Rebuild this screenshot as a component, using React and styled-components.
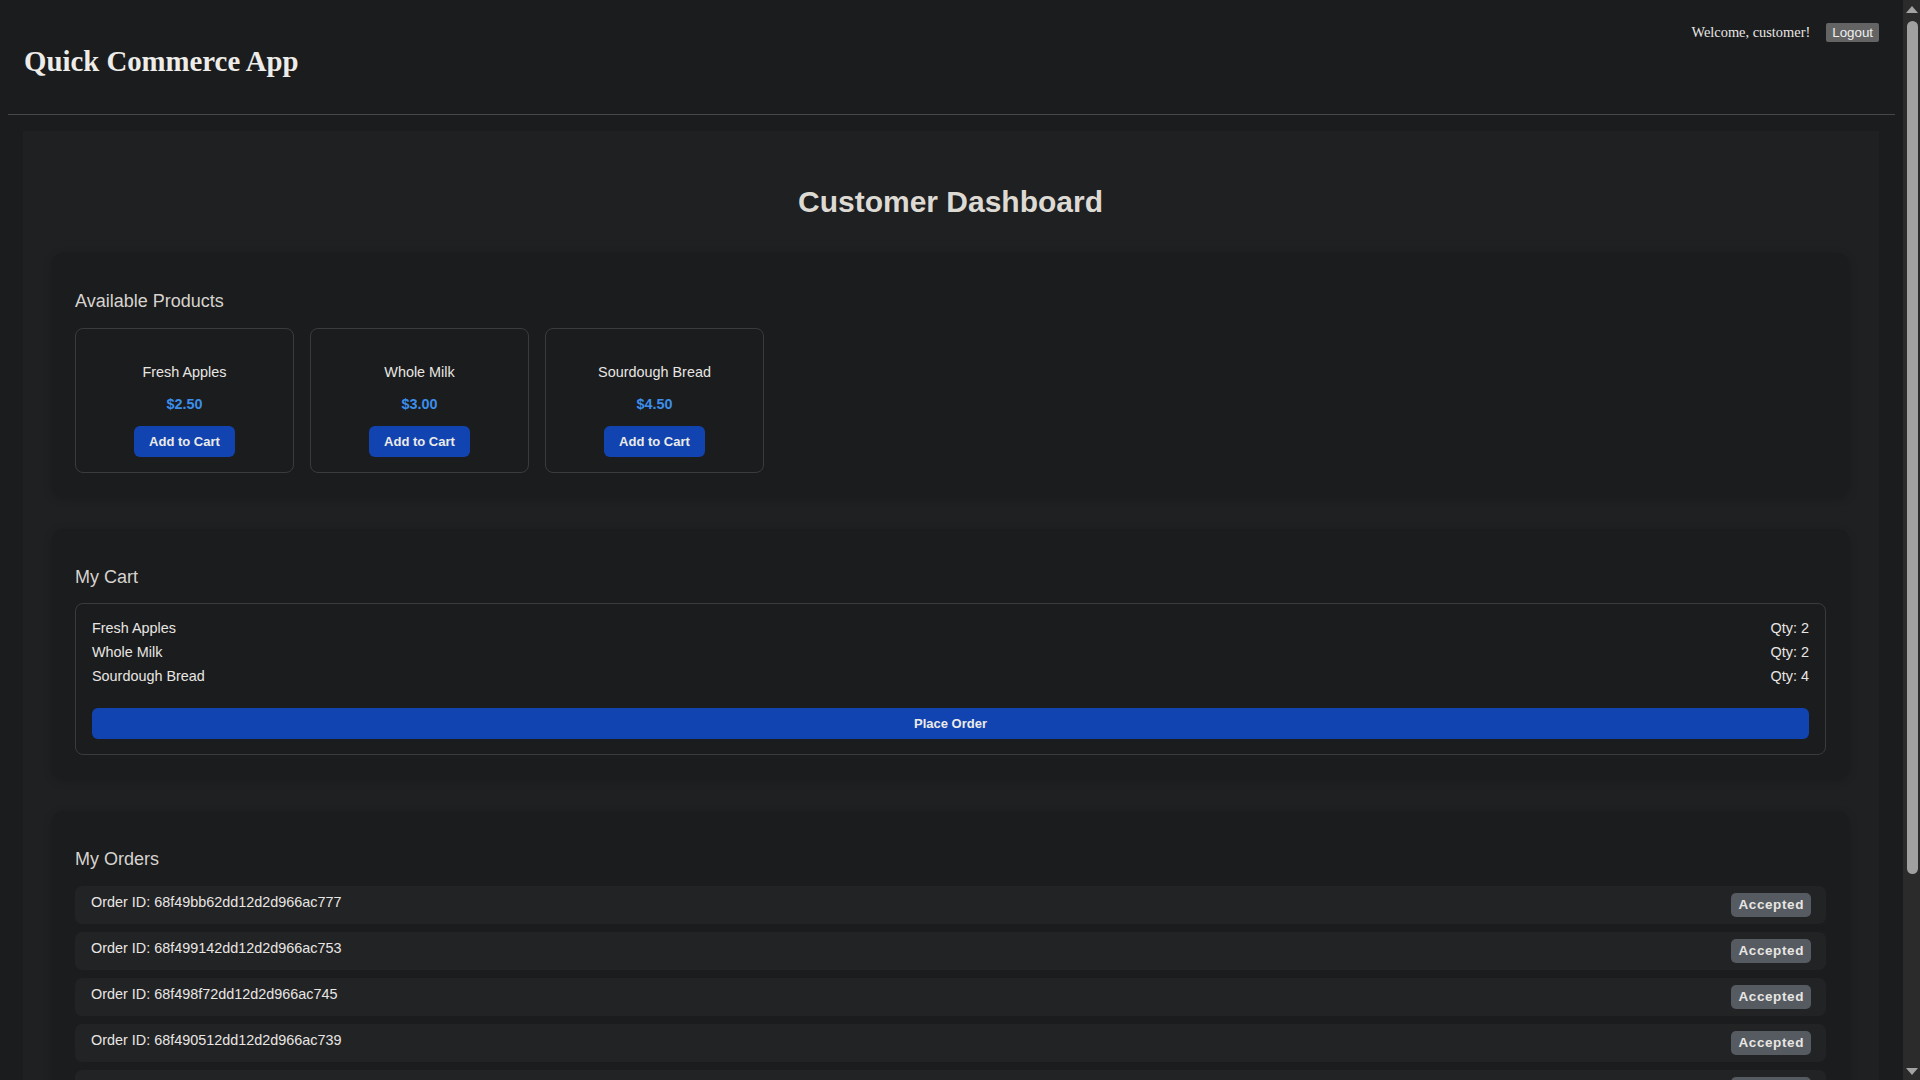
import React from "react";
import styled, { createGlobalStyle } from "styled-components";

const GlobalStyle = createGlobalStyle`
    html {
        color-scheme: dark;
        background: #1b1c1e;
    }
    body {
        margin: 8px 25px 8px 8px;
        background: #1b1c1e;
        color: #e8e6e3;
        font-family: "Liberation Sans", Arial, sans-serif;
    }
`;

const products = [
    { name: "Fresh Apples", price: "$2.50" },
    { name: "Whole Milk", price: "$3.00" },
    { name: "Sourdough Bread", price: "$4.50" },
];

const cart = [
    { name: "Fresh Apples", qty: 2 },
    { name: "Whole Milk", qty: 2 },
    { name: "Sourdough Bread", qty: 4 },
];

const orders = [
    "68f49bb62dd12d2d966ac777",
    "68f499142dd12d2d966ac753",
    "68f498f72dd12d2d966ac745",
    "68f490512dd12d2d966ac739",
    "68f48f3a2dd12d2d966ac72b",
    "68f48e1c2dd12d2d966ac71d",
    "68f48c052dd12d2d966ac70f",
    "68f48a9e2dd12d2d966ac701",
];

export default function App() {
    return (
        <>
            <GlobalStyle />
            <Header>
                <AppTitle>Quick Commerce App</AppTitle>
                <UserBox>
                    <Welcome>Welcome, customer!</Welcome>
                    <LogoutButton>Logout</LogoutButton>
                </UserBox>
            </Header>
            <Dashboard>
                <PageTitle>Customer Dashboard</PageTitle>

                <Section>
                    <SectionTitle>Available Products</SectionTitle>
                    <ProductList>
                        {products.map((p) => (
                            <ProductCard key={p.name}>
                                <ProductName>{p.name}</ProductName>
                                <Price>{p.price}</Price>
                                <BlueButton>Add to Cart</BlueButton>
                            </ProductCard>
                        ))}
                    </ProductList>
                </Section>

                <Section>
                    <SectionTitle>My Cart</SectionTitle>
                    <CartBox>
                        {cart.map((c) => (
                            <CartRow key={c.name}>
                                <span>{c.name}</span>
                                <span>Qty: {c.qty}</span>
                            </CartRow>
                        ))}
                        <BlueButton $wide>Place Order</BlueButton>
                    </CartBox>
                </Section>

                <Section>
                    <SectionTitle>My Orders</SectionTitle>
                    <OrderList>
                        {orders.map((id) => (
                            <OrderRow key={id}>
                                <OrderId>Order ID: {id}</OrderId>
                                <Badge>Accepted</Badge>
                            </OrderRow>
                        ))}
                    </OrderList>
                </Section>
            </Dashboard>
            <ScrollTrack>
                <Arrow />
                <Thumb />
                <Arrow $down />
            </ScrollTrack>
        </>
    );
}

const Header = styled.header`
    display: flex;
    justify-content: space-between;
    align-items: flex-start;
    padding: 0 16px;
    border-bottom: 1px solid #46474a;
`;

const AppTitle = styled.h1`
    font-family: "Liberation Serif", "Times New Roman", serif;
    font-weight: bold;
    font-size: 28.8px;
    line-height: 33px;
    color: #eeece8;
    margin: 37px 0 36px;
`;

const UserBox = styled.div`
    display: flex;
    align-items: center;
    margin-top: 15px;
`;

const Welcome = styled.span`
    font-family: "Liberation Serif", "Times New Roman", serif;
    font-size: 14.4px;
    color: #e8e6e3;
    margin-right: 16px;
`;

const LogoutButton = styled.button`
    font-family: "Liberation Sans", Arial, sans-serif;
    font-size: 13.33px;
    color: #f0f0f0;
    background: #646464;
    border: none;
    border-radius: 2px;
    padding: 2px 6px;
    line-height: 15px;
`;

const Dashboard = styled.main`
    margin: 16px 16px 16px 15px;
    padding: 30px 30px 30px 29px;
    background: #1f2022;
`;

const PageTitle = styled.h2`
    text-align: center;
    font-size: 30px;
    font-weight: bold;
    color: #dddad4;
    margin: 24px 0 34px;
`;

const Section = styled.section`
    background: #1b1c1e;
    border-radius: 12px;
    padding: 20px 23px 24px;
    margin-bottom: 32px;
    box-shadow: 0 2px 10px rgba(0, 0, 0, 0.18);
`;

const SectionTitle = styled.h3`
    font-size: 18px;
    font-weight: normal;
    color: #d6d3ce;
    margin: 18px 0 15.5px;
`;

const ProductList = styled.div`
    display: flex;
    gap: 16px;
`;

const ProductCard = styled.div`
    width: 219px;
    box-sizing: border-box;
    border: 1px solid #3a3b3e;
    border-radius: 8px;
    padding: 15px;
    display: flex;
    flex-direction: column;
    align-items: center;
`;

const ProductName = styled.div`
    font-size: 14.4px;
    line-height: 17px;
    margin: 20px 0 14px;
    color: #e8e6e3;
`;

const Price = styled.div`
    font-size: 14.4px;
    font-weight: bold;
    line-height: 18px;
    color: #3b8eea;
    margin-bottom: 13px;
`;

const BlueButton = styled.button`
    font-family: "Liberation Sans", Arial, sans-serif;
    font-size: 13px;
    font-weight: bold;
    color: #ecebe8;
    background: #1144b1;
    border: none;
    border-radius: 6px;
    height: 31px;
    padding: 0 15px;
    width: ${(p) => (p.$wide ? "100%" : "auto")};
    margin-top: ${(p) => (p.$wide ? "20px" : "0")};
`;

const CartBox = styled.div`
    border: 1px solid #3a3b3e;
    border-radius: 8px;
    padding: 12px 16px 15px;
`;

const CartRow = styled.div`
    display: flex;
    justify-content: space-between;
    font-size: 14.4px;
    line-height: 24px;
    color: #e8e6e3;
`;

const OrderList = styled.div`
    display: flex;
    flex-direction: column;
    gap: 8px;
`;

const OrderRow = styled.div`
    display: flex;
    justify-content: space-between;
    align-items: center;
    height: 38px;
    padding: 0 15px 0 16px;
    background: #222325;
    border-radius: 7px;
`;

const OrderId = styled.span`
    font-size: 14.4px;
    color: #e8e6e3;
    margin-top: -6px;
`;

const Badge = styled.span`
    font-size: 13.5px;
    font-weight: bold;
    letter-spacing: 0.6px;
    color: #e8e6e3;
    background: #555b61;
    border-radius: 5px;
    padding: 4px 7px;
    line-height: 16px;
`;

/* stand-in for the browser's dark scrollbar seen in the screenshot */
const ScrollTrack = styled.div`
    position: fixed;
    top: 0;
    right: 0;
    width: 17px;
    height: 100vh;
    background: #2b2b2b;
    display: flex;
    flex-direction: column;
    align-items: center;
    padding: 6px 0 5px;
    box-sizing: border-box;
`;

const Thumb = styled.div`
    width: 11px;
    margin: 8px 0 auto 1px;
    height: 853px;
    border-radius: 6px;
    background: #a0a0a0;
`;

const Arrow = styled.div`
    width: 0;
    height: 0;
    margin-left: 1px;
    border-left: 6px solid transparent;
    border-right: 6px solid transparent;
    ${(p) =>
        p.$down
            ? "border-top: 7px solid #a3a3a3;"
            : "border-bottom: 7px solid #a3a3a3;"}
`;
